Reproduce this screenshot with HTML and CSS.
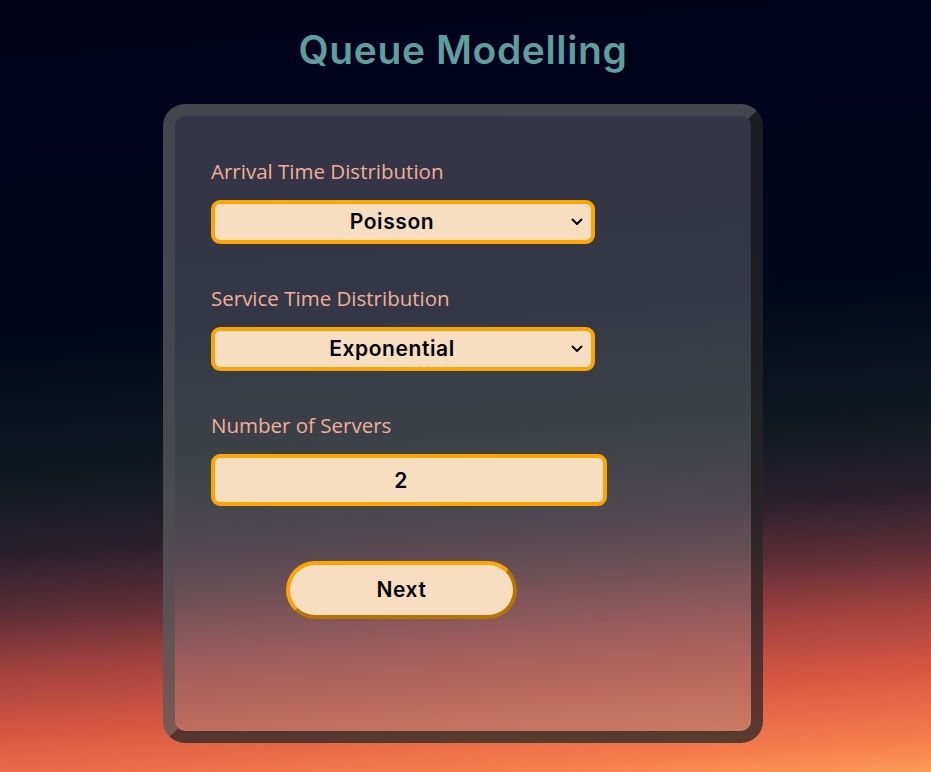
FILE: index.html
```html
<!DOCTYPE html>
<html lang="en">
<head>
<meta charset="utf-8">
<title>Queue Modelling</title>
<link rel="stylesheet" href="styles.css">
</head>
<body>
  <h1 class="title">Queue Modelling</h1>
  <main class="card">
    <form class="form">
      <div class="field">
        <label class="label" for="arrival">Arrival Time Distribution</label>
        <div class="select-wrap">
          <select id="arrival" class="select">
            <option>Poisson</option>
          </select>
          <svg class="chevron" width="12" height="8" viewBox="0 0 12 8" aria-hidden="true"><path d="M1.5 1.5 L6 6 L10.5 1.5" fill="none" stroke="#000" stroke-width="2" stroke-linecap="round" stroke-linejoin="round"/></svg>
        </div>
      </div>
      <div class="field">
        <label class="label" for="service">Service Time Distribution</label>
        <div class="select-wrap">
          <select id="service" class="select">
            <option>Exponential</option>
          </select>
          <svg class="chevron" width="12" height="8" viewBox="0 0 12 8" aria-hidden="true"><path d="M1.5 1.5 L6 6 L10.5 1.5" fill="none" stroke="#000" stroke-width="2" stroke-linecap="round" stroke-linejoin="round"/></svg>
        </div>
      </div>
      <div class="field field-last">
        <label class="label" for="servers">Number of Servers</label>
        <input id="servers" class="input" type="text" value="2">
      </div>
      <button type="button" class="btn">Next</button>
    </form>
  </main>
</body>
</html>
```
FILE: styles.css
```css
html, body {
  margin: 0;
  padding: 0;
}

body {
  box-sizing: border-box;
  min-height: 772px;
  padding-right: 5px;
  font-family: "Open Sans", "Noto Sans", sans-serif;
  background: linear-gradient(176deg,
    #00021a 0%,
    #00041c 20%,
    #00081c 40%,
    #0e1820 56%,
    #28202c 66%,
    #5a2d37 73%,
    #a0413e 80%,
    #d65642 87.5%,
    #f57d4b 96%,
    #ff9a58 100%);
  overflow: hidden;
}

.title {
  margin: 27px 0 0;
  font-family: "Inter", sans-serif;
  font-weight: 600;
  font-size: 39px;
  line-height: 46px;
  letter-spacing: 0.6px;
  text-align: center;
  color: #5f9ea0;
}

.card {
  box-sizing: border-box;
  width: 600px;
  margin: 31px auto 0;
  padding: 43px 36px 112px;
  border: 12px solid;
  border-color: rgba(80, 80, 84, 0.64) rgba(14, 13, 12, 0.59) rgba(14, 13, 12, 0.59) rgba(80, 80, 84, 0.64);
  border-radius: 22px;
  background: rgba(143, 142, 145, 0.36);
}

.form {
  width: 384px;
}

.field {
  margin-bottom: 42px;
}

.field-last {
  margin-bottom: 0;
}

.label {
  display: block;
  margin-bottom: 17px;
  font-size: 20.5px;
  line-height: 24px;
  color: #f2ae9a;
}

.select-wrap {
  position: relative;
}

.select,
.input,
.btn {
  font-family: "Inter", sans-serif;
  font-weight: 600;
  font-size: 21px;
  letter-spacing: 0.6px;
  color: #000;
  background: #f8dec0;
  outline: none;
}

.select {
  -webkit-appearance: none;
  appearance: none;
  display: block;
  box-sizing: border-box;
  width: 384px;
  height: 44px;
  margin: 0;
  padding: 0 28px 2px 6px;
  border: 4px solid #ffa500;
  border-radius: 9px;
  text-align: center;
  text-align-last: center;
}

.chevron {
  position: absolute;
  right: 12px;
  top: 18px;
  pointer-events: none;
}

.input {
  display: block;
  box-sizing: border-box;
  width: 396px;
  height: 52px;
  margin: 0;
  padding: 0 20px 0 4px;
  border: 4px solid #ffa500;
  border-radius: 9px;
  text-align: center;
}

.btn {
  display: block;
  box-sizing: border-box;
  width: 231px;
  height: 58px;
  margin: 55px 0 0 75px;
  padding: 0 0 2px;
  border: 4px solid;
  border-color: #ffa500 #b37400 #b37400 #ffa500;
  border-radius: 30px;
  cursor: pointer;
}
```
